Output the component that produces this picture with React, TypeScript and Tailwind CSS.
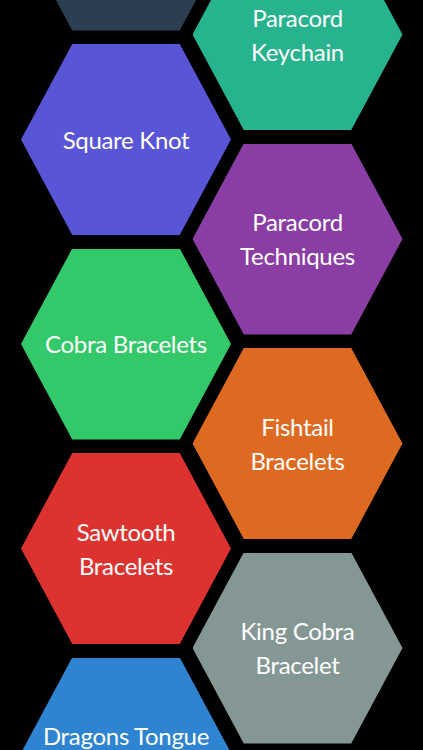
const left = [
  { lines: [""], color: "bg-[#2c3e50]" },
  { lines: ["Square Knot"], color: "bg-[#5856d6]" },
  { lines: ["Cobra Bracelets"], color: "bg-[#33c96a]" },
  { lines: ["Sawtooth", "Bracelets"], color: "bg-[#dd3330]" },
  { lines: ["Dragons Tongue", "Bracelets"], color: "bg-[#2e84d0]" },
]

const right = [
  { lines: ["Paracord", "Keychain"], color: "bg-[#27b38e]" },
  { lines: ["Paracord", "Techniques"], color: "bg-[#8a3ea4]" },
  { lines: ["Fishtail", "Bracelets"], color: "bg-[#de6a21]" },
  { lines: ["King Cobra", "Bracelet"], color: "bg-[#859794]" },
]

function Hex({ lines, color }: { lines: string[]; color: string }) {
  return (
    <div
      className={`${color} w-[210px] h-[191px] shrink-0 flex flex-col items-center justify-center text-white text-[24px] tracking-[-0.3px] leading-[34px] [clip-path:polygon(24.4%_0,75.6%_0,100%_50%,75.6%_100%,24.4%_100%,0_50%)]`}
    >
      {lines.map((l, i) => (
        <span key={i} className="whitespace-nowrap">
          {l}
        </span>
      ))}
    </div>
  )
}

export default function App() {
  return (
    <div className="w-[423px] h-[750px] overflow-hidden bg-black font-['Lato',sans-serif]">
      <div className="flex pl-[21px]">
        <div className="flex flex-col gap-[13.5px] mt-[-160.5px]">
          {left.map((h, i) => (
            <Hex key={i} {...h} />
          ))}
        </div>
        <div className="flex flex-col gap-[13.5px] mt-[-61px] ml-[-38.5px]">
          {right.map((h, i) => (
            <Hex key={i} {...h} />
          ))}
        </div>
      </div>
    </div>
  )
}
